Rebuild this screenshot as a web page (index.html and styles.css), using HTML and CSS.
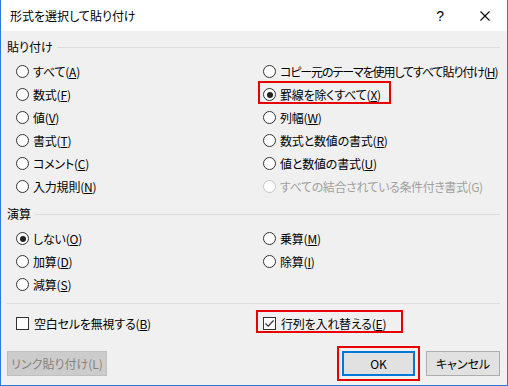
FILE: index.html
```html
<!DOCTYPE html>
<html lang="ja">
<head>
  <meta charset="UTF-8">
  <title>形式を選択して貼り付け</title>
  <link rel="stylesheet" href="styles.css">
</head>
<body>
  <div class="dialog">
    <div class="titlebar">
      <span class="title">形式を選択して貼り付け</span>
      <span class="help">?</span>
      <svg class="close" width="10" height="10" viewBox="0 0 10 10">
        <path d="M0.5 0.5 L9.5 9.5 M9.5 0.5 L0.5 9.5" stroke="#000" stroke-width="1.1" fill="none"/>
      </svg>
    </div>

    <div class="content">
      <div class="group-head"><span>貼り付け</span><i class="rule"></i></div>
      <div class="options">
        <label class="opt"><span class="radio"></span><span>すべて(<u>A</u>)</span></label>
        <label class="opt long"><span class="radio"></span><span>コピー元のテーマを使用してすべて貼り付け(<u>H</u>)</span></label>
        <label class="opt"><span class="radio"></span><span>数式(<u>F</u>)</span></label>
        <label class="opt mark mark-a"><span class="radio on"></span><span>罫線を除くすべて(<u>X</u>)</span></label>
        <label class="opt"><span class="radio"></span><span>値(<u>V</u>)</span></label>
        <label class="opt"><span class="radio"></span><span>列幅(<u>W</u>)</span></label>
        <label class="opt"><span class="radio"></span><span>書式(<u>T</u>)</span></label>
        <label class="opt"><span class="radio"></span><span>数式と数値の書式(<u>R</u>)</span></label>
        <label class="opt"><span class="radio"></span><span>コメント(<u>C</u>)</span></label>
        <label class="opt"><span class="radio"></span><span>値と数値の書式(<u>U</u>)</span></label>
        <label class="opt"><span class="radio"></span><span>入力規則(<u>N</u>)</span></label>
        <label class="opt disabled"><span class="radio"></span><span>すべての結合されている条件付き書式(G)</span></label>
      </div>

      <div class="group-head second"><span>演算</span><i class="rule"></i></div>
      <div class="options">
        <label class="opt"><span class="radio on"></span><span>しない(<u>O</u>)</span></label>
        <label class="opt"><span class="radio"></span><span>乗算(<u>M</u>)</span></label>
        <label class="opt"><span class="radio"></span><span>加算(<u>D</u>)</span></label>
        <label class="opt"><span class="radio"></span><span>除算(<u>I</u>)</span></label>
        <label class="opt"><span class="radio"></span><span>減算(<u>S</u>)</span></label>
      </div>

      <i class="rule full"></i>

      <div class="options checks">
        <label class="opt"><span class="check"></span><span>空白セルを無視する(<u>B</u>)</span></label>
        <label class="opt mark mark-b">
          <span class="check">
            <svg width="11" height="11" viewBox="0 0 11 11"><path d="M1.5 5.5 L4.2 8.2 L9.5 2.5" stroke="#333" stroke-width="1.2" fill="none"/></svg>
          </span><span>行列を入れ替える(<u>E</u>)</span>
        </label>
      </div>

      <div class="buttons">
        <button class="btn link" disabled>リンク貼り付け(L)</button>
        <span class="spacer"></span>
        <button class="btn ok">OK</button>
        <button class="btn">キャンセル</button>
      </div>
    </div>
  </div>
</body>
</html>
```

FILE: styles.css
```css
* {
  box-sizing: border-box;
}

body {
  margin: 0;
  font-family: "Noto Sans CJK JP", "Noto Sans", sans-serif;
  font-size: 12px;
  font-feature-settings: "palt";
  color: #000;
}

.dialog {
  width: 508px;
  height: 386px;
  border: 1px solid #2b7bd6;
  border-top: none;
  background-color: #f0f0f0;
  display: flex;
  flex-direction: column;
}

.titlebar {
  height: 31px;
  background-color: #fff;
  display: flex;
  align-items: center;
  padding-left: 9px;
}

.title {
  flex: 1;
  font-size: 12px;
}

.help {
  font-family: "Liberation Sans", sans-serif;
  font-size: 14px;
  margin-right: 36px;
}

.close {
  margin-right: 17px;
}

.content {
  flex: 1;
  padding: 8px 7px 8px 6px;
  display: flex;
  flex-direction: column;
}

.group-head {
  display: flex;
  align-items: center;
  height: 16px;
  line-height: 16px;
  gap: 4px;
  margin-bottom: 5px;
}

.group-head.second {
  margin-top: 8px;
}

.rule {
  display: block;
  flex: 1;
  height: 1px;
  background-color: #dcdcdc;
}

.rule.full {
  flex: none;
  margin-top: 7px;
}

.options {
  display: grid;
  grid-template-columns: 247px 1fr;
  grid-auto-rows: 23px;
  padding-left: 9px;
}

.checks {
  margin-top: 8px;
}

.opt {
  display: flex;
  align-items: center;
  gap: 4px;
  white-space: nowrap;
  letter-spacing: -0.2px;
}

.opt.long {
  letter-spacing: -1.1px;
}

.opt u {
  text-decoration: underline;
  text-underline-offset: 1px;
}

.radio {
  width: 13px;
  height: 13px;
  border: 1px solid #333;
  border-radius: 50%;
  background-color: #fff;
  display: flex;
  align-items: center;
  justify-content: center;
  flex: none;
}

.radio.on::after {
  content: "";
  width: 6px;
  height: 6px;
  border-radius: 50%;
  background-color: #222;
}

.check {
  width: 13px;
  height: 13px;
  border: 1px solid #333;
  background-color: #fff;
  display: flex;
  align-items: center;
  justify-content: center;
  flex: none;
  margin-right: 1px;
}

.disabled {
  color: #a0a0a0;
  letter-spacing: -0.4px;
}

.disabled .radio {
  border-color: #c6c6c6;
}

.mark {
  position: relative;
  width: fit-content;
}

.mark::after {
  content: "";
  position: absolute;
  top: -2px;
  bottom: 2px;
  left: -5px;
  border: 2px solid #e80000;
}

.mark-a::after {
  width: 129px;
}

.mark-b::after {
  left: -7px;
  width: 143px;
}

.buttons {
  display: flex;
  margin-top: 16px;
  gap: 11px;
}

.spacer {
  flex: 1;
}

.btn {
  height: 25px;
  font-family: inherit;
  font-size: 12px;
  font-feature-settings: "palt";
  background-color: #e1e1e1;
  border: 1px solid #adadad;
  color: #000;
  padding: 0;
  width: 74px;
}

.btn.link {
  width: 100px;
  background-color: #cccccc;
  border-color: #bfbfbf;
  color: #838383;
}

.btn.ok {
  width: 73px;
  border: 2px solid #0078d7;
  outline: 2px solid #e80000;
  outline-offset: 3px;
}
```
